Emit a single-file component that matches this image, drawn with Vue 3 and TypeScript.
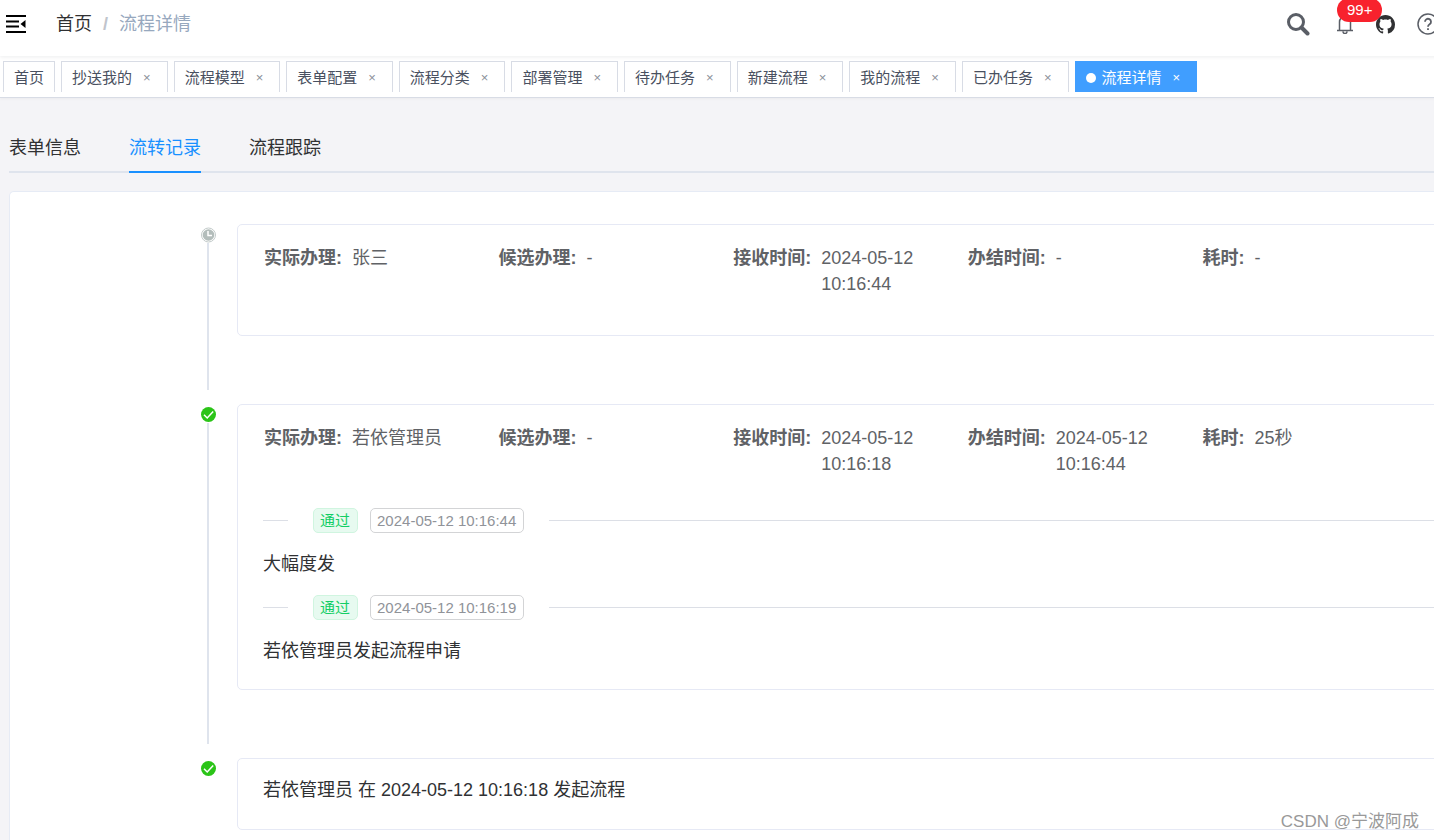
<script setup lang="ts">
import { ref } from 'vue'

interface Field {
  label: string
  value: string
}
interface Comment {
  time: string
  text: string
}
interface Step {
  done: boolean
  fields: Field[]
  comments: Comment[]
  summary?: string
}

const views = ['首页', '抄送我的', '流程模型', '表单配置', '流程分类', '部署管理', '待办任务', '新建流程', '我的流程', '已办任务', '流程详情']
const activeView = ref('流程详情')

const tabs = ['表单信息', '流转记录', '流程跟踪']
const activeTab = ref('流转记录')

const steps: Step[] = [
  {
    done: false,
    fields: [
      { label: '实际办理', value: '张三' },
      { label: '候选办理', value: '-' },
      { label: '接收时间', value: '2024-05-12 10:16:44' },
      { label: '办结时间', value: '-' },
      { label: '耗时', value: '-' },
    ],
    comments: [],
  },
  {
    done: true,
    fields: [
      { label: '实际办理', value: '若依管理员' },
      { label: '候选办理', value: '-' },
      { label: '接收时间', value: '2024-05-12 10:16:18' },
      { label: '办结时间', value: '2024-05-12 10:16:44' },
      { label: '耗时', value: '25秒' },
    ],
    comments: [
      { time: '2024-05-12 10:16:44', text: '大幅度发' },
      { time: '2024-05-12 10:16:19', text: '若依管理员发起流程申请' },
    ],
  },
  {
    done: true,
    fields: [],
    comments: [],
    summary: '若依管理员 在 2024-05-12 10:16:18 发起流程',
  },
]
</script>

<template>
  <div class="viewport">
    <div class="page">
      <header class="navbar">
        <button class="icon-btn" type="button" aria-label="折叠菜单">
          <svg width="22" height="20" viewBox="0 0 22 20">
            <path d="M1 2h20M1 7.500h13M1 12.500h13M1 18h20" stroke="#000" stroke-width="2" fill="none" />
            <path d="M20.500 6v8l-5-4z" fill="#000" />
          </svg>
        </button>
        <nav class="breadcrumb" aria-label="面包屑">
          <a href="#">首页</a>
          <span class="slash">/</span>
          <span class="current">流程详情</span>
        </nav>
        <div class="tools">
          <button class="icon-btn search" type="button" aria-label="搜索">
            <svg width="24" height="24" viewBox="0 0 24 24">
              <circle cx="10" cy="10" r="7.500" fill="none" stroke="#5a5e66" stroke-width="3" />
              <path d="M15.500 15.500l6 6" stroke="#5a5e66" stroke-width="4" stroke-linecap="round" />
            </svg>
          </button>
          <button class="icon-btn bell" type="button" aria-label="通知">
            <svg width="18" height="20" viewBox="0 0 18 20">
              <path d="M3.500 16V8a5.500 5.500 0 0 1 11 0v8M1 16.500h16M7 17.500a2 2 0 0 0 4 0" fill="none" stroke="#5a5e66" stroke-width="1.500" />
            </svg>
            <span class="badge">99+</span>
          </button>
          <a class="icon-btn" href="#" aria-label="源码地址">
            <svg width="19" height="19" viewBox="0 0 16 16">
              <path fill="#303133" d="M8 0C3.580 0 0 3.580 0 8c0 3.540 2.290 6.530 5.470 7.590.4.070.55-.17.55-.38 0-.19-.01-.82-.01-1.490-2.010.37-2.530-.49-2.690-.94-.09-.23-.48-.94-.82-1.130-.28-.15-.68-.52-.01-.53.63-.01 1.080.58 1.230.82.72 1.210 1.870.87 2.330.66.07-.52.28-.87.51-1.070-1.780-.2-3.640-.89-3.640-3.950 0-.87.31-1.590.82-2.150-.08-.2-.36-1.020.08-2.120 0 0 .67-.21 2.200.82.64-.18 1.320-.27 2-.27.68 0 1.360.09 2 .27 1.530-1.040 2.200-.82 2.200-.82.44 1.100.16 1.920.08 2.120.51.56.82 1.270.82 2.150 0 3.070-1.870 3.750-3.650 3.950.29.25.54.73.54 1.480 0 1.070-.01 1.930-.01 2.200 0 .21.15.46.55.38A8.013 8.013 0 0 0 16 8c0-4.420-3.580-8-8-8z" />
            </svg>
          </a>
          <a class="icon-btn" href="#" aria-label="文档地址">
            <svg width="22" height="22" viewBox="0 0 22 22" fill="none" stroke="#5a5e66">
              <circle cx="11" cy="11" r="10" stroke-width="1.500" />
              <path d="M8 8.800a3 3 0 1 1 4.600 2.500c-1.100.7-1.600 1.200-1.600 2.500" stroke-width="1.800" />
              <path d="M11 15.200v1.800" stroke-width="1.800" />
            </svg>
          </a>
        </div>
      </header>

      <ul class="views">
        <li v-for="view in views" :key="view" class="view" :class="{ active: view === activeView }">
          <a href="#" @click.prevent="activeView = view">{{ view }}</a>
          <button v-if="view !== '首页'" type="button" :aria-label="'关闭' + view">×</button>
        </li>
      </ul>

      <main class="main">
        <div class="tabs" role="tablist">
          <button
            v-for="tab in tabs"
            :key="tab"
            type="button"
            role="tab"
            class="tab"
            :class="{ active: tab === activeTab }"
            :aria-selected="tab === activeTab"
            @click="activeTab = tab"
          >{{ tab }}</button>
        </div>

        <section class="panel">
          <ol class="timeline">
            <li v-for="(step, i) in steps" :key="i" class="step">
              <div class="rail">
                <svg v-if="step.done" width="16" height="16" viewBox="0 0 16 16">
                  <circle cx="8.500" cy="7.500" r="7.500" fill="#2bc418" />
                  <path d="M4 7.800l3.200 3.200 6-6.500" fill="none" stroke="#fff" stroke-width="1.500" />
                </svg>
                <svg v-else width="16" height="16" viewBox="0 0 16 16">
                  <circle cx="8.500" cy="8" r="7" fill="#fff" stroke="#c3cbca" />
                  <circle cx="8.500" cy="8" r="5.800" fill="#b3bdbb" />
                  <path d="M8 4V8.500H12" fill="none" stroke="#fff" stroke-width="1.500" />
                </svg>
                <span v-if="i < steps.length - 1" class="tail"></span>
              </div>
              <article class="card">
                <dl v-if="step.fields.length" class="fields">
                  <div v-for="field in step.fields" :key="field.label" class="field">
                    <dt>{{ field.label }}:</dt>
                    <dd>{{ field.value }}</dd>
                  </div>
                </dl>
                <div v-for="comment in step.comments" :key="comment.time" class="comment">
                  <div class="divider">
                    <span class="tag pass">通过</span>
                    <time class="tag">{{ comment.time }}</time>
                  </div>
                  <p>{{ comment.text }}</p>
                </div>
                <p v-if="step.summary">{{ step.summary }}</p>
              </article>
            </li>
          </ol>
        </section>
      </main>
    </div>
    <div class="watermark">CSDN @宁波阿成</div>
  </div>
</template>

<style>
body {
  background: #f4f4f7;
}
</style>

<style scoped>
.viewport {
  position: relative;
  overflow: hidden;
  min-height: 100vh;
  display: flex;
  font-family: "Liberation Sans", "Noto Sans CJK SC", sans-serif;
  font-size: 18px;
  line-height: 26px;
  color: #303133;
}
.page {
  flex: none;
  width: calc(100% + 76px);
  display: flex;
  flex-direction: column;
}
button {
  font: inherit;
  color: inherit;
  background: none;
  border: 0;
  padding: 0;
  cursor: pointer;
}
a {
  color: inherit;
  text-decoration: none;
}
ul,
ol,
dl,
dd,
p {
  margin: 0;
  padding: 0;
  list-style: none;
}
svg {
  display: block;
}
.navbar {
  position: relative;
  height: 56px;
  padding: 0 71px 8px 5px;
  box-sizing: border-box;
  background: #fff;
  box-shadow: 0 1px 4px rgba(0, 21, 41, 0.08);
  display: flex;
  align-items: center;
}
.breadcrumb {
  display: flex;
  gap: 11px;
  margin-left: 29px;
}
.slash {
  color: #c0c4cc;
  font-weight: bold;
}
.current {
  color: #97a8be;
}
.tools {
  margin-left: auto;
  display: flex;
  align-items: center;
  gap: 22px;
}
.search {
  margin-right: 4px;
}
.bell {
  position: relative;
}
.badge {
  position: absolute;
  left: 1px;
  top: -16px;
  height: 24px;
  padding: 0 10px;
  border-radius: 12px;
  background: #f8222d;
  color: #fff;
  font-size: 15px;
  line-height: 24px;
}
.views {
  height: 42px;
  padding: 5px 3px 0;
  box-sizing: border-box;
  background: #fff;
  border-bottom: 1px solid #d8dce5;
  box-shadow: 0 1px 3px rgba(0, 0, 0, 0.04);
  display: flex;
  gap: 6px;
  margin-bottom: 35px;
}
.view {
  flex: none;
  height: 31px;
  padding: 1px 10px 0;
  box-sizing: border-box;
  border: 1px solid #d8dce5;
  border-bottom: 0;
  background: #fff;
  color: #495060;
  font-size: 15px;
  display: flex;
  align-items: center;
}
.view button {
  margin: 0 6px 0 11px;
  font-size: 13px;
  color: #8b9099;
}
.view.active {
  background: #409eff;
  border-color: #409eff;
  color: #fff;
}
.view.active button {
  color: #fff;
}
.view.active::before {
  content: "";
  width: 10px;
  height: 10px;
  margin-right: 6px;
  border-radius: 50%;
  background: #fff;
}
.main {
  flex: 1;
  display: flex;
  flex-direction: column;
  padding: 0 20px 0 9px;
}
.tabs {
  display: flex;
  gap: 48px;
  margin-bottom: 18px;
  box-shadow: inset 0 -2px #dfe4ed;
}
.tab {
  height: 40px;
  padding-bottom: 8px;
  border-bottom: 2px solid transparent;
}
.tab.active {
  color: #1890ff;
  border-color: #1890ff;
}
.panel {
  flex: 1;
  padding: 32px 27px 0 190px;
  background: #fff;
  border: 1px solid #e6ebf5;
  border-bottom: 0;
  border-radius: 5px 5px 0 0;
}
.step {
  display: flex;
  gap: 21px;
}
.rail {
  width: 16px;
  padding-top: 3px;
  display: flex;
  flex-direction: column;
  align-items: center;
}
.tail {
  flex: 1;
  width: 2px;
  margin-bottom: 14px;
  background: #dfe4ed;
}
.card {
  flex: 1;
  margin-bottom: 68px;
  padding: 18px 25px 25px;
  border: 1px solid #e6e9f5;
  border-radius: 5px;
}
.card > p {
  padding-bottom: 1px;
}
.step:last-child .card {
  margin-bottom: 10px;
}
.fields {
  display: grid;
  grid-template-columns: repeat(5, 1fr);
  padding: 2px 0 13px;
  color: #606266;
}
.field {
  display: flex;
  gap: 10px;
  padding-left: 1px;
}
.field dt {
  flex: none;
  font-weight: bold;
}
.comment {
  margin-top: 18px;
}
.comment p {
  margin-top: 18px;
}
.divider {
  display: flex;
  align-items: center;
  gap: 12px;
}
.divider::before,
.divider::after {
  content: "";
  height: 1px;
  background: #dcdfe6;
}
.divider::before {
  width: 25px;
  margin-right: 13px;
}
.divider::after {
  flex: 1;
  margin-left: 13px;
}
.tag {
  padding: 0 7px 0 6px;
  border: 1px solid #d3d4d6;
  border-radius: 5px;
  color: #909399;
  font-size: 15px;
  line-height: 23px;
}
.tag.pass {
  color: #13ce66;
  background: #e7faf0;
  border-color: #d0f5e0;
}
.watermark {
  position: absolute;
  right: 15px;
  bottom: 5px;
  color: #999;
  font-size: 17px;
}
</style>
